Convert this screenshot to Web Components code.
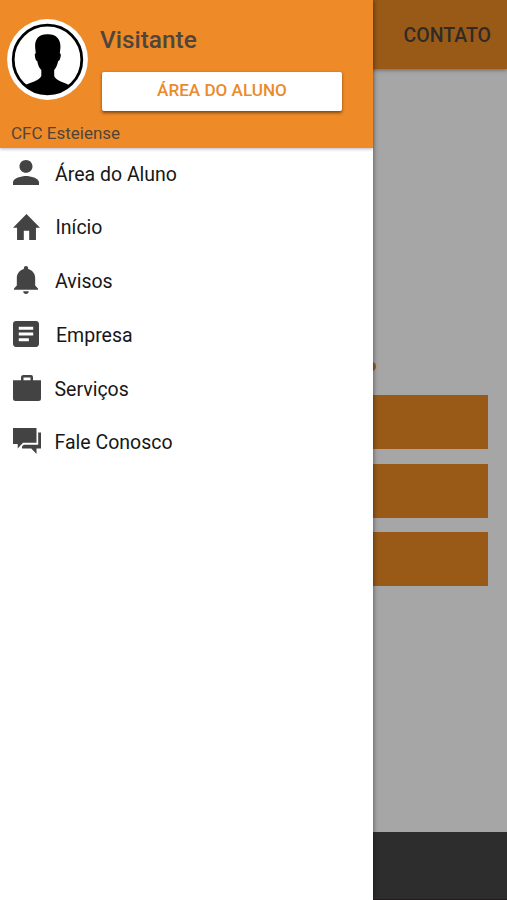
<!DOCTYPE html>
<html lang="pt-BR">
<head>
<meta charset="utf-8">
<title>CFC Esteiense</title>
<style>
html, body { margin: 0; height: 100%; overflow: hidden; }
body { font-family: Roboto, "Liberation Sans", sans-serif; }
</style>
</head>
<body>
<app-shell>
  <app-page slot="page"></app-page>
  <side-drawer slot="drawer">
    <profile-header slot="header"></profile-header>
    <menu-item icon="person">Área do Aluno</menu-item>
    <menu-item icon="home">Início</menu-item>
    <menu-item icon="bell">Avisos</menu-item>
    <menu-item icon="article">Empresa</menu-item>
    <menu-item icon="work">Serviços</menu-item>
    <menu-item icon="chat">Fale Conosco</menu-item>
  </side-drawer>
</app-shell>
<script>
const define = (name, html, init) => customElements.define(name, class extends HTMLElement {
  constructor() {
    super();
    this.attachShadow({ mode: 'open' }).innerHTML = html;
  }
  connectedCallback() { if (init) init(this, this.shadowRoot); }
});

define('app-shell', `
<style>
:host { display: block; position: relative; width: 507px; height: 900px; overflow: hidden; }
::slotted([slot=drawer]) { position: absolute; left: 0; top: 0; }
</style>
<slot name="page"></slot><slot name="drawer"></slot>`);

define('app-page', `
<style>
:host { display: flex; flex-direction: column; height: 900px; background: #a6a6a6; }
header { display: flex; align-items: center; justify-content: flex-end; height: 69px; box-sizing: border-box;
  padding: 1px 16px 0 0; background: #995a18; box-shadow: 0 1px 4px rgba(0,0,0,.4);
  color: #302b27; font-size: 19.5px; font-weight: 500; }
main { flex: 1; display: flex; flex-direction: column; padding: 293px 19.5px 0 20px; }
.dot { align-self: flex-end; width: 8px; height: 9px; margin: 0 112px 24.2px 0; border-radius: 50%; background: #995a18; }
.bar { height: 54px; margin-bottom: 14.5px; background: #995a18; }
footer { height: 68.5px; background: #2d2d2d; border-bottom: 1px solid #24191d; box-sizing: border-box; }
</style>
<header><span>CONTATO</span></header>
<main><div class="dot"></div><div class="bar"></div><div class="bar"></div><div class="bar"></div></main>
<footer></footer>`);

define('side-drawer', `
<style>
:host { display: flex; flex-direction: column; width: 372.6px; height: 900px; background: #fff;
  box-shadow: 0 0 5px rgba(0,0,0,.55); }
nav { display: flex; flex-direction: column; }
</style>
<slot name="header"></slot><nav><slot></slot></nav>`);

define('user-avatar', `
<style>
:host { display: block; width: 81px; height: 81px; }
svg { display: block; }
</style>
<svg width="81" height="81" viewBox="0 0 81 81">
  <circle cx="40.5" cy="40.5" r="40.4" fill="#fff"/>
  <clipPath id="c"><circle cx="40.5" cy="40.5" r="34"/></clipPath>
  <path clip-path="url(#c)" d="M40.5 15.3C49 15 54 20 53.4 29L52.8 34.5C54.3 34.2 54 37.5 52.8 40.6C52.3 41.8 51.6 42 51.2 42C50.4 46 49 49 47.2 51V57C49 62 58 63.5 66 68V78H14V68C23 63.5 32 62 34.3 57V51C32 49 31 46 30.2 42C28.8 42 28 38.5 27.8 36C27.7 34.6 28.2 34.2 28.8 34.5L28.2 29C27.4 20 32 15 40.5 15.3Z"/>
  <circle cx="40.5" cy="40.5" r="34.3" fill="none" stroke="#000" stroke-width="2.8"/>
</svg>`);

define('raised-button', `
<style>
:host { display: block; }
button { display: flex; align-items: center; justify-content: center; width: 240px; height: 39px; padding: 0 0 3px;
  border: 0; border-radius: 2px; background: #fff; box-shadow: 0 1.5px 3px rgba(60,30,0,.6);
  color: #e98b2c; font: 500 17.1px Roboto, sans-serif; }
</style>
<button><span><slot></slot></span></button>`);

define('profile-header', `
<style>
:host { display: grid; grid-template: 19px 81px 1fr / 7px 95px 1fr; height: 147.5px; flex: none; background: #ee8a27;
  box-shadow: 0 1px 3px rgba(80,70,110,.4); z-index: 1; color: #50453d; }
user-avatar { grid-area: 2 / 2; }
.info { grid-area: 2 / 3 / 4 / 4; }
h1 { margin: 7px 0 0 -2px; height: 30px; font-size: 24.4px; font-weight: 500; line-height: 28px; }
raised-button { margin-top: 15.5px; }
.org { grid-area: 3 / 1 / 4 / 4; margin: 22px 0 0 11px; font-size: 17px; line-height: 22px; }
</style>
<user-avatar></user-avatar>
<div class="info"><h1>Visitante</h1><raised-button>ÁREA DO ALUNO</raised-button></div>
<div class="org">CFC Esteiense</div>`);

/* Each icon: left, top inside its row, width, height, tight viewBox, path, label x. */
const ICONS = {
  person: [13, 12.3, 26, 25.5, '4 4 16 16', 'M12 12c2.21 0 4-1.79 4-4s-1.79-4-4-4-4 1.79-4 4 1.79 4 4 4zm0 2c-2.67 0-8 1.34-8 4v2h16v-2c0-2.66-5.33-4-8-4z', 55],
  home: [13.4, 12.3, 27, 26, '2 3 20 17', 'M10 20v-6h4v6h5v-8h3L12 3 2 12h3v8z', 55.5],
  bell: [14, 11, 24, 28, '3 2 17 20', 'M11.5 22c1.1 0 2-.9 2-2h-4c0 1.1.9 2 2 2zm6.5-6v-5.5c0-3.07-2.13-5.64-5-6.32V3.5c0-.83-.67-1.5-1.5-1.5S10 2.67 10 3.5v.68c-2.87.68-5 3.25-5 6.32V16l-2 2v1h17v-1l-2-2z', 55],
  article: [13, 12.1, 26, 26, '3 3 18 18', 'M19 3H5c-1.1 0-2 .9-2 2v14c0 1.1.9 2 2 2h14c1.1 0 2-.9 2-2V5c0-1.1-.9-2-2-2zm-5 14H7v-2h7v2zm3-4H7v-2h10v2zm0-4H7V7h10v2z', 56],
  work: [13, 12.2, 28, 26, '0 0 28 26', 'M10.5 0H18Q20 0 20 2V5.2H28V23.5Q28 26 25.5 26H2.5Q0 26 0 23.5V5.2H8V2Q8 0 10.5 0ZM10.5 2.6V5.2H17.5V2.6Z', 54.5],
  chat: [13, 12.2, 28, 26, '0 0 28 26', 'M0 0H23.5V14.7H10L4.7 20.5V16H0ZM25.2 4.5H28V20.6H23.5V26L18.3 20.6H9V18.6L10.8 16.7H25.2Z', 54.5]
};

define('menu-item', `
<style>
:host { display: grid; grid-template-columns: 55px 1fr; height: 53.75px; flex: none; }
svg { fill: #434343; }
.label { align-self: center; padding-top: .6px; color: #171717; font-size: 19.5px; line-height: 26px; }
</style>
<svg preserveAspectRatio="none"><path fill-rule="evenodd"/></svg><span class="label"><slot></slot></span>`,
(el, root) => {
  const [x, y, w, h, box, d, tx] = ICONS[el.getAttribute('icon')];
  const svg = root.querySelector('svg');
  svg.setAttribute('width', w);
  svg.setAttribute('height', h);
  svg.setAttribute('viewBox', box);
  svg.style.margin = `${y}px 0 0 ${x}px`;
  root.querySelector('path').setAttribute('d', d);
  root.querySelector('.label').style.marginLeft = `${tx - 55}px`;
});
</script>
</body>
</html>
